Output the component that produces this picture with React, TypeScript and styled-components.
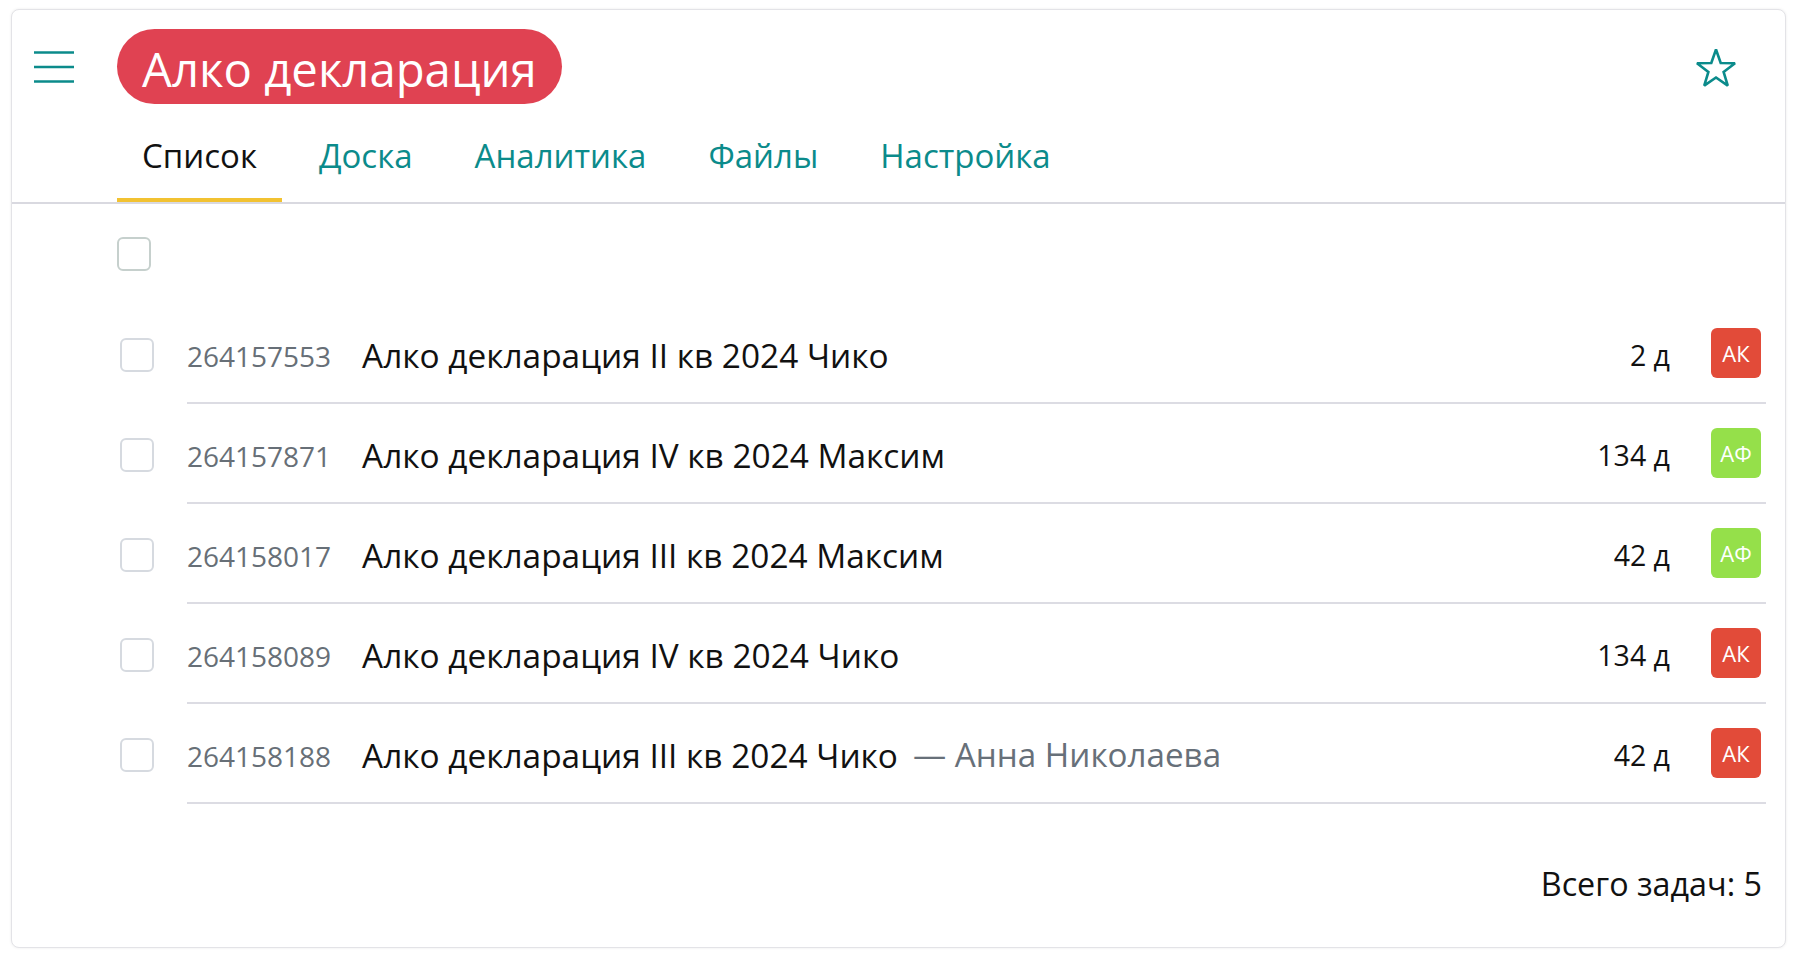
import React from "react";
import styled, { createGlobalStyle } from "styled-components";

const GlobalStyle = createGlobalStyle`
  html, body {
    margin: 0;
    padding: 0;
    background: #ffffff;
    font-family: "Open Sans", "Noto Sans", sans-serif;
  }
  * { box-sizing: border-box; }
`;

const Page = styled.div`
  padding: 9px 14px 12px 11px;
  height: 960px;
`;

const Card = styled.div`
  height: 939px;
  border: 1px solid #e3e3e7;
  border-radius: 8px;
  box-shadow: 0 0 3px rgba(0, 0, 0, 0.08);
  background: #fff;
  display: flex;
  flex-direction: column;
`;

const Header = styled.header`
  border-bottom: 2px solid #d9d9e0;
`;

const TopBar = styled.div`
  display: flex;
  align-items: center;
  height: 75px;
  margin-top: 19px;
  padding-left: 22px;
  padding-right: 46px;
`;

const MenuButton = styled.button`
  width: 40px;
  height: 32px;
  padding: 0;
  border: 0;
  background: none;
  margin-right: 43px;
  display: flex;
  align-items: center;
  justify-content: center;
  cursor: pointer;
`;

const Pill = styled.h1`
  margin: 0;
  height: 75px;
  padding: 4px 25px 0;
  border-radius: 38px;
  background: #e04252;
  color: #fff;
  font-weight: 400;
  font-size: 47.3px;
  line-height: 71px;
  white-space: nowrap;
`;

const Spacer = styled.div`
  flex: 1;
`;

const StarButton = styled.button`
  width: 46px;
  height: 46px;
  padding: 0;
  border: 0;
  background: none;
  display: flex;
  align-items: center;
  justify-content: center;
  margin-top: 4px;
`;

const Tabs = styled.nav`
  display: flex;
  align-items: flex-end;
  gap: 12px;
  height: 98px;
  margin-left: 105px;
`;

const Tab = styled.a<{ $active?: boolean }>`
  display: block;
  padding: 0 25px 18px;
  font-size: 33px;
  line-height: 48px;
  color: ${(p) => (p.$active ? "#111111" : "#0b8b8b")};
  border-bottom: 4px solid ${(p) => (p.$active ? "#f2c231" : "transparent")};
  text-decoration: none;
  white-space: nowrap;
`;

const List = styled.section`
  display: flex;
  flex-direction: column;
`;

const SelectAllRow = styled.div`
  height: 100px;
  display: flex;
  align-items: center;
  padding-left: 105px;
`;

const Checkbox = styled.span<{ $tone?: "header" | "row" }>`
  display: block;
  width: 34px;
  height: 34px;
  border-radius: 6px;
  border: 2px solid ${(p) => (p.$tone === "header" ? "#c6d0cd" : "#d6dae0")};
  background: #fff;
`;

const Row = styled.div`
  display: flex;
  height: 100px;
`;

const CheckCell = styled.div`
  width: 175px;
  display: flex;
  align-items: center;
  padding-left: 108px;
  padding-top: 2px;
`;

const RowContent = styled.div`
  flex: 1;
  display: flex;
  align-items: center;
  margin-right: 19px;
  padding-right: 5px;
  border-bottom: 2px solid #dcdce3;
`;

const TaskNumber = styled.span`
  font-size: 28px;
  line-height: 40px;
  color: #676f77;
  margin-right: 31px;
  padding-top: 6px;
`;

const TaskTitle = styled.span`
  font-size: 33.4px;
  line-height: 40px;
  color: #111111;
  white-space: nowrap;
  padding-top: 4px;
`;

const Author = styled.span`
  font-size: 33.2px;
  line-height: 40px;
  color: #677079;
  margin-left: 15px;
  white-space: nowrap;
  padding-top: 4px;
`;

const Days = styled.span`
  font-size: 28.5px;
  line-height: 40px;
  color: #111111;
  margin-right: 41px;
  white-space: nowrap;
  padding-top: 4px;
`;

const Badge = styled.span<{ $color: string }>`
  width: 50px;
  height: 50px;
  border-radius: 6px;
  background: ${(p) => p.$color};
  color: #fff;
  font-size: 22px;
  line-height: 50px;
  text-align: center;
  flex-shrink: 0;
`;

const Footer = styled.footer`
  display: flex;
  justify-content: flex-end;
  padding-right: 23px;
  margin-top: 59px;
  font-size: 32.3px;
  line-height: 40px;
  color: #111111;
`;

const MenuIcon = () => (
  <svg width="40" height="32" viewBox="0 0 40 32" aria-hidden="true">
    <g stroke="#0b8b8b" strokeWidth="2.6">
      <line x1="0" y1="1.5" x2="40" y2="1.5" />
      <line x1="0" y1="16" x2="40" y2="16" />
      <line x1="0" y1="30.5" x2="40" y2="30.5" />
    </g>
  </svg>
);

const starPoints = (() => {
  const cx = 23;
  const cy = 23.5;
  const R = 20;
  const r = 8;
  const pts: string[] = [];
  for (let i = 0; i < 10; i++) {
    const rad = i % 2 === 0 ? R : r;
    const a = (-90 + i * 36) * (Math.PI / 180);
    pts.push(`${(cx + rad * Math.cos(a)).toFixed(2)},${(cy + rad * Math.sin(a)).toFixed(2)}`);
  }
  return pts.join(" ");
})();

const StarIcon = () => (
  <svg width="46" height="46" viewBox="0 0 46 46" aria-hidden="true">
    <polygon
      points={starPoints}
      fill="none"
      stroke="#0b8b8b"
      strokeWidth="2.6"
      strokeLinejoin="miter"
      strokeMiterlimit={2}
    />
  </svg>
);

type Task = {
  id: string;
  title: string;
  author?: string;
  days: string;
  initials: string;
  color: string;
};

const RED = "#e24b39";
const GREEN = "#95e04a";

const tasks: Task[] = [
  { id: "264157553", title: "Алко декларация II кв 2024 Чико", days: "2 д", initials: "АК", color: RED },
  { id: "264157871", title: "Алко декларация IV кв 2024 Максим", days: "134 д", initials: "АФ", color: GREEN },
  { id: "264158017", title: "Алко декларация III кв 2024 Максим", days: "42 д", initials: "АФ", color: GREEN },
  { id: "264158089", title: "Алко декларация IV кв 2024 Чико", days: "134 д", initials: "АК", color: RED },
  {
    id: "264158188",
    title: "Алко декларация III кв 2024 Чико",
    author: "— Анна Николаева",
    days: "42 д",
    initials: "АК",
    color: RED,
  },
];

const tabs = ["Список", "Доска", "Аналитика", "Файлы", "Настройка"];

export default function App() {
  return (
    <>
      <GlobalStyle />
      <Page>
        <Card>
          <Header>
            <TopBar>
              <MenuButton aria-label="Меню">
                <MenuIcon />
              </MenuButton>
              <Pill>Алко декларация</Pill>
              <Spacer />
              <StarButton aria-label="Избранное">
                <StarIcon />
              </StarButton>
            </TopBar>
            <Tabs>
              {tabs.map((t, i) => (
                <Tab key={t} $active={i === 0}>
                  {t}
                </Tab>
              ))}
            </Tabs>
          </Header>
          <List>
            <SelectAllRow>
              <Checkbox $tone="header" />
            </SelectAllRow>
            {tasks.map((task) => (
              <Row key={task.id}>
                <CheckCell>
                  <Checkbox $tone="row" />
                </CheckCell>
                <RowContent>
                  <TaskNumber>{task.id}</TaskNumber>
                  <TaskTitle>{task.title}</TaskTitle>
                  {task.author && <Author>{task.author}</Author>}
                  <Spacer />
                  <Days>{task.days}</Days>
                  <Badge $color={task.color}>{task.initials}</Badge>
                </RowContent>
              </Row>
            ))}
          </List>
          <Footer>Всего задач: 5</Footer>
        </Card>
      </Page>
    </>
  );
}
